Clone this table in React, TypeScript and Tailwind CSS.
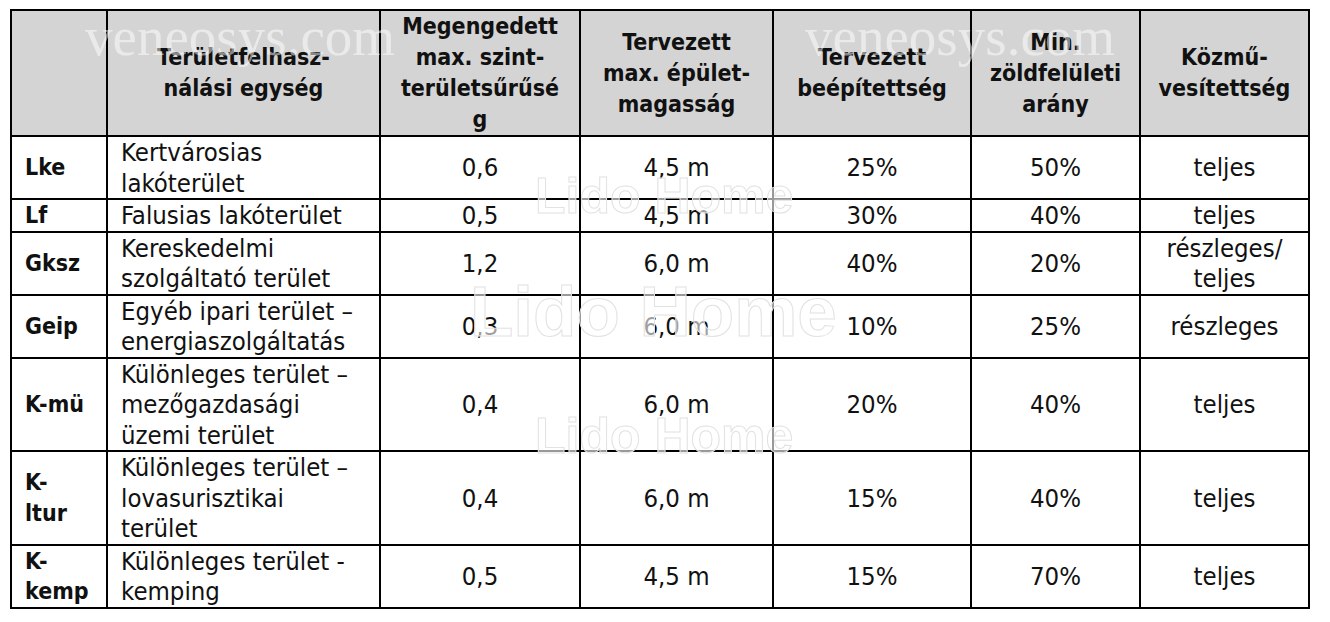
import React from "react";

type Row = {
  code: React.ReactNode;
  name: React.ReactNode;
  density: string;
  height: string;
  built: string;
  green: string;
  utility: React.ReactNode;
};

const rows: Row[] = [
  { code: "Lke", name: <>Kertvárosias<br />lakóterület</>, density: "0,6", height: "4,5 m", built: "25%", green: "50%", utility: "teljes" },
  { code: "Lf", name: "Falusias lakóterület", density: "0,5", height: "4,5 m", built: "30%", green: "40%", utility: "teljes" },
  { code: "Gksz", name: <>Kereskedelmi<br />szolgáltató terület</>, density: "1,2", height: "6,0 m", built: "40%", green: "20%", utility: <>részleges/<br />teljes</> },
  { code: "Geip", name: <>Egyéb ipari terület –<br />energiaszolgáltatás</>, density: "0,3", height: "6,0 m", built: "10%", green: "25%", utility: "részleges" },
  { code: "K-mü", name: <>Különleges terület –<br />mezőgazdasági<br />üzemi terület</>, density: "0,4", height: "6,0 m", built: "20%", green: "40%", utility: "teljes" },
  { code: <>K-<br />ltur</>, name: <>Különleges terület –<br />lovasurisztikai<br />terület</>, density: "0,4", height: "6,0 m", built: "15%", green: "40%", utility: "teljes" },
  { code: <>K-<br />kemp</>, name: <>Különleges terület -<br />kemping</>, density: "0,5", height: "4,5 m", built: "15%", green: "70%", utility: "teljes" },
];

const th = "border-2 border-black bg-[#d4d4d4] p-0 text-center align-middle text-[23px] font-bold leading-[31px]";
const td = "border-2 border-black p-0 text-center align-middle";

export default function App() {
  return (
    <div className="relative min-h-[622px] w-[1330px] bg-white pl-[10px] pt-[9px] font-['DejaVu_Sans_Condensed','DejaVu_Sans',sans-serif] text-[25.5px] leading-[30.5px] text-[#111]">
      <table className="w-[1298px] table-fixed border-collapse">
        <colgroup>
          <col className="w-[96px]" />
          <col className="w-[273px]" />
          <col className="w-[200px]" />
          <col className="w-[193px]" />
          <col className="w-[198px]" />
          <col className="w-[169px]" />
          <col className="w-[169px]" />
        </colgroup>
        <thead>
          <tr>
            <th className={th}></th>
            <th className={th}>Területfelhasz-<br />nálási egység</th>
            <th className={th}>Megengedett<br />max. szint-<br />területsűrűsé<br />g</th>
            <th className={th}>Tervezett<br />max. épület-<br />magasság</th>
            <th className={th}>Tervezett<br />beépítettség</th>
            <th className={th}>Min.<br />zöldfelületi<br />arány</th>
            <th className={th}>Közmű-<br />vesítettség</th>
          </tr>
        </thead>
        <tbody>
          {rows.map((r, i) => (
            <tr key={i}>
              <td className="border-2 border-black p-0 pl-[13px] text-left align-middle text-[23px] font-bold">{r.code}</td>
              <td className="border-2 border-black p-0 pl-[13px] text-left align-middle">{r.name}</td>
              <td className={td}>{r.density}</td>
              <td className={td}>{r.height}</td>
              <td className={td}>{r.built}</td>
              <td className={td}>{r.green}</td>
              <td className={td}>{r.utility}</td>
            </tr>
          ))}
        </tbody>
      </table>

      {/* watermarks */}
      <div className="pointer-events-none absolute left-[85px] top-[5px] font-['Liberation_Serif',serif] text-[55px] leading-[64px] text-white/50">veneosys.com</div>
      <div className="pointer-events-none absolute left-[805px] top-[5px] font-['Liberation_Serif',serif] text-[55px] leading-[64px] text-white/50">veneosys.com</div>
      <div className="pointer-events-none absolute left-[535px] top-[166px] font-['Liberation_Sans',sans-serif] text-[50px] font-bold leading-[60px] text-white/60 [-webkit-text-stroke:1px_#e2e2e2]">Lido Home</div>
      <div className="pointer-events-none absolute left-[470px] top-[272px] font-['Liberation_Sans',sans-serif] text-[71px] font-bold leading-[80px] text-white/60 [-webkit-text-stroke:1px_#e2e2e2]">Lido Home</div>
      <div className="pointer-events-none absolute left-[535px] top-[406px] font-['Liberation_Sans',sans-serif] text-[50px] font-bold leading-[60px] text-white/60 [-webkit-text-stroke:1px_#e2e2e2]">Lido Home</div>
    </div>
  );
}
